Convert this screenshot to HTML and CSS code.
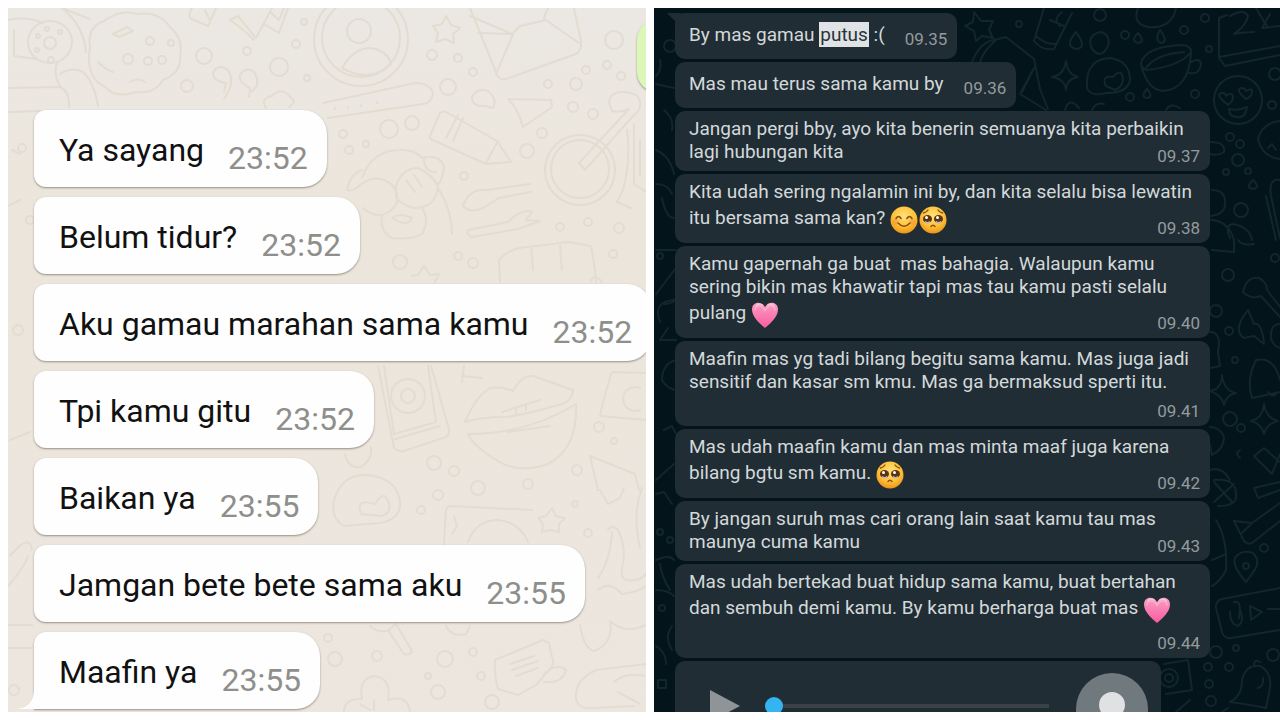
FILE: index.html
```html
<!DOCTYPE html>
<html lang="id">
<head>
<meta charset="UTF-8">
<meta name="viewport" content="width=device-width, initial-scale=1.0">
<title>Chat</title>
<link rel="stylesheet" href="styles.css">
</head>
<body>

<!-- shared emoji -->
<svg class="defs" aria-hidden="true">
    <defs>
        <radialGradient id="face" cx="50%" cy="35%" r="65%">
            <stop offset="0" stop-color="#ffe27a"/>
            <stop offset="0.6" stop-color="#fdc23a"/>
            <stop offset="1" stop-color="#ee9418"/>
        </radialGradient>
        <linearGradient id="pink" x1="0" y1="0" x2="0" y2="1">
            <stop offset="0" stop-color="#f3a3c4"/>
            <stop offset="0.35" stop-color="#fb86b6"/>
            <stop offset="1" stop-color="#f85ba2"/>
        </linearGradient>
        <symbol id="smile" viewBox="0 0 28 28">
            <circle cx="14" cy="14" r="13.5" fill="url(#face)"/>
            <circle cx="5.500" cy="16" r="3" fill="#f79a3c" opacity="0.6"/>
            <circle cx="22.500" cy="16" r="3" fill="#f79a3c" opacity="0.6"/>
            <path d="M6 12.500q2.500-4 5 0M17 12.500q2.500-4 5 0M8 17q6 6.500 12 0" fill="none" stroke="#8a4d10" stroke-width="1.600" stroke-linecap="round"/>
        </symbol>
        <symbol id="plead" viewBox="0 0 28 28">
            <circle cx="14" cy="14" r="13.500" fill="url(#face)"/>
            <ellipse cx="8.500" cy="13" rx="4.500" ry="4" fill="#5a3413"/>
            <ellipse cx="19.500" cy="13" rx="4.500" ry="4" fill="#5a3413"/>
            <circle cx="7.500" cy="11.500" r="1.500" fill="#fff"/>
            <circle cx="18.500" cy="11.500" r="1.500" fill="#fff"/>
            <path d="M6 15.500q2.500 2.500 5 0M17 15.500q2.500 2.500 5 0" fill="none" stroke="#b9b6cc" stroke-width="1.600"/>
            <path d="M4.500 7q3-.5 4.500-3M23.500 7q-3-.5-4.500-3M12 20.500q2-2.500 4 0" fill="none" stroke="#8c4f10" stroke-width="1.400" stroke-linecap="round"/>
        </symbol>
        <symbol id="heart" viewBox="0 0 28 28">
            <path d="M14 27C8 22 1 15.500 1 8.500 1 0 11 0 14 6c3-6 13-6 13 2.500C27 15.500 20 22 14 27z" fill="url(#pink)"/>
            <path d="M4 9.500c0-6 7-6.500 10 0 3-6.500 10-6 10 0" fill="none" stroke="#ffb3d1" stroke-width="1.200"/>
            <path d="M5 5c1-2 4-2.500 6-1M17 4c2-1.500 5-1 6 1" fill="none" stroke="#f8c6da" stroke-width="1.400" stroke-linecap="round"/>
        </symbol>
    </defs>
</svg>

<main class="compare">

    <section class="chat light">
        <svg class="doodles" viewBox="8 8 638 704" preserveAspectRatio="xMinYMin slice" aria-hidden="true">
            <!-- teddy, cookie, notes -->
            <path d="M8 20q20-4 34 3M14 30v26l22 3M62 8l28 11M62 8q22 18 24 44M8 88l52-1q10 4 9 20M8 112l34-1M60 74q12-8 23-2 11 10 15 34M57 62q-4 12 3 24"/>
            <ellipse cx="50" cy="42" rx="22" ry="21"/>
            <circle cx="50" cy="43" r="6"/><circle cx="38" cy="36" r="2"/><circle cx="47" cy="29" r="2"/><circle cx="60" cy="32" r="2"/><circle cx="37" cy="50" r="2"/><circle cx="51" cy="60" r="3"/>
            <path d="M90 47q-3-20 14-26 16-12 33-7 22-3 33 13 14 12 10 30 1 16-17 23-8 14-27 12-20 7-31-5-20-10-15-40z"/>
            <path d="M113 34l14-7 6 4-14 6zM98 62q8 8 15 10M130 82q8-5 15 0"/>
            <circle cx="150" cy="41" r="4"/><circle cx="128" cy="59" r="5"/><circle cx="171" cy="43" r="3"/><circle cx="148" cy="61" r="4"/><circle cx="162" cy="60" r="4"/>
            <path d="M192 8q-6 10 2 12l14 6 8-18M205 10l4 9M230 20l8-4 18 22 16-30M230 20q12 8 24 20M264 24l15 9 9-25M270 12l9 8 5-12"/>
            <circle cx="204" cy="56" r="8"/><circle cx="279" cy="67" r="9"/><circle cx="187" cy="86" r="6"/><circle cx="247" cy="51" r="4"/><circle cx="304" cy="22" r="3"/><circle cx="296" cy="44" r="4"/><circle cx="307" cy="78" r="3"/>
            <path d="M224 92l2-9q-13-2-13-10 5-10 15-3 8 12-4 29M249 97l1-9q-12-6-10-13 6-9 14-3 8 12-3 20M266 108q-6-10 6-12 10-10 18 1 8 4-1 10"/>

            <!-- contact, star, envelope -->
            <circle cx="361" cy="39" r="47"/><circle cx="361" cy="38" r="39"/><circle cx="359" cy="31" r="12"/>
            <path d="M342 68q14-24 34-19 13 5 15 15-20 20-49 4z"/>
            <path d="M446 16l5 9 9 3-7 6 1 9-9-4-9 3 2-9-5-7 9-2z"/>
            <path d="M470 8l28 69q3 3 8 2l70-25q6-4 5-13l-7-33M496 74l18-42 6-6 22-5q5-2 8 2l29 20M470 16l42 18-34-1M548 8q-4 8-4 12"/>
            <circle cx="614" cy="40" r="9"/><circle cx="432" cy="55" r="5"/><circle cx="458" cy="58" r="4"/><circle cx="473" cy="72" r="4"/><circle cx="448" cy="87" r="8"/><circle cx="576" cy="84" r="6"/><circle cx="586" cy="70" r="4"/><circle cx="548" cy="84" r="4"/><circle cx="607" cy="65" r="4"/><circle cx="621" cy="76" r="4"/>

            <!-- ruler, pencil, plane -->
            <path d="M323 103l92-20q15 0 18 10-1 10-10 11l-95 14M335 108v1M348 107v1M361 105v1M377 102v1"/>
            <path d="M472 97q6-10 16-6 10 8 5 17l-8-2q-13 1-13-9zM508 99l43 1 1 7-29 20q-5-18-15-28z"/>
            <path d="M430 136l10-23q4-3 8 0l49 28 14 21-25 2-51-23q-6-2-5-5zM446 138l12-23M453 141l10-23M486 163l12-22"/>
            <circle cx="389" cy="129" r="9"/><circle cx="412" cy="123" r="7"/><circle cx="343" cy="134" r="4"/><circle cx="349" cy="150" r="4"/><circle cx="366" cy="144" r="3"/><circle cx="527" cy="151" r="7"/><circle cx="542" cy="133" r="5"/><circle cx="573" cy="107" r="5"/><circle cx="593" cy="114" r="5"/>

            <!-- bicycle -->
            <circle cx="580" cy="170" r="35"/><circle cx="580" cy="169" r="29"/>
            <path d="M579 163l50-54q-10 4-17 2-8-15 7-19 22-1 21 13 0 6-7 11l-48 54zM627 130q4 30-4 60l-6 12 14 6M634 124v60l12 8M640 140v36"/>

            <!-- monkey, spoons -->
            <path d="M362 178q10-28 38-28 14-1 22 8 20-4 22 10-2 14-7 17M362 170q-12 4-15 20 6 2 12-4 16-14 32-2 14 16-2 28-12 8-26-4M396 186q6-18 22-18 14 6 20 18-2 22-24 22-10-2-18-10zM406 180l9 12M414 175l8 12M424 158q0 14 12 14M382 216q-2 16 10 22 20 2 30-4 8-14 0-26M392 218q8-6 20 0-4 10-20 0zM438 188q14 22 14 46"/>
            <path d="M463 206q6-18 24-16l43-6M463 206q8 8 20 2l16-10 32-6M468 230l40-8q14-14 24-10l-6 8 14 1-22 8-46 8q-6-2-4-7z"/>
            <circle cx="560" cy="227" r="4"/><circle cx="588" cy="222" r="4"/><circle cx="619" cy="228" r="5"/><circle cx="464" cy="176" r="4"/>
            <path d="M500 282l-1-22q6-8 20-12l50-6 22 4q4 20 5 36M531 246l2 24M560 246l2 24M412 276l6-1 6-9 6 9 9-1-4 8M590 282q4-10 12 0"/>
            <circle cx="400" cy="262" r="7"/><circle cx="473" cy="263" r="5"/><circle cx="458" cy="256" r="4"/><circle cx="613" cy="254" r="4"/>

            <!-- music player, lips, camera -->
            <path d="M378 366l16 82q4 4 10 3l42-14q4-3 3-8l-18-63M384 366l10 68 42-12-8-56M392 440l48-14"/>
            <circle cx="408" cy="396" r="17"/><circle cx="408" cy="396" r="7"/>
            <path d="M465 422q12-28 26-34 10-2 22 3 8-16 20-15l40 14q0 8-8 13-40 12-60 14-24 0-40 5zM468 434q60 0 108-30 2 44-28 60-30 10-50-3-24-14-30-27zM502 412l38-12M508 432l42-6M516 408v6M526 404v6"/>
            <path d="M646 373l-34-1q-8 24-12 44l46 4M640 388a12 12 0 1 0 0 22M462 376l20 2M464 366l-2 16"/>
            <circle cx="599" cy="427" r="5"/><circle cx="614" cy="441" r="3"/><circle cx="434" cy="463" r="7"/><circle cx="454" cy="471" r="5"/><circle cx="577" cy="470" r="5"/>
            <path d="M590 456l8 34M590 456l45 18 4 16M600 490l8 14 12-6 4-10M345 455q4 14 16 12 12-8 10-20"/>

            <!-- balloon, magnifier, phone frame -->
            <path d="M334 500q8-26 32-25 30 2 34 26 2 18-20 22l-36 3q-14-8-10-26zM361 514q-6-16 14-10 10-16 14 0 2 10-8 12z"/>
            <path d="M444 544l2-34q1-4 6-4l80 4M468 542q8-22 30-22 22 2 30 22M454 516l3 10-5 8M552 508l4 8 9 2-6 6v8l-8-2-9 2 1-8-5-6 8-2z"/>
            <circle cx="438" cy="495" r="5"/><circle cx="421" cy="510" r="4"/><circle cx="478" cy="488" r="7"/><circle cx="528" cy="484" r="5"/><circle cx="575" cy="504" r="3"/><circle cx="588" cy="533" r="4"/>
            <path d="M608 530q4-6 10 0 8 16 5 34-4 14 4 16 12 2 19-6M612 532q-2 30-14 46M642 488q-10 26-2 60M598 590q12-10 24 4 16-2 24-8M580 625q4 24 14 26 20-8 16-30 16 14 36 4"/>
            <path d="M388 630l16 24q6 2 8-3l-16-27zM370 626q8 8 20 4M446 626q6 12 20 8l4-8"/>
            <circle cx="335" cy="659" r="7"/><circle cx="377" cy="656" r="5"/><circle cx="445" cy="659" r="8"/><circle cx="438" cy="692" r="7"/><circle cx="428" cy="676" r="3"/><circle cx="473" cy="652" r="4"/><circle cx="481" cy="676" r="4"/><circle cx="492" cy="702" r="7"/><circle cx="328" cy="638" r="4"/>
            <path d="M344 712q0-14 18-13-4-20 12-23 18 2 14 24 20-6 22 12M374 700v10M360 704l10 6"/>
            <path d="M495 660l48-20 6 3 3 14q4 6-4 14l-12 14-18 10-20-6q-4-14-3-29zM510 664l24-8M512 670l26-9M516 676l22-8M544 674q14-12 22-4-4 14-22 12"/>
            <path d="M576 700q-2-20 20-30l50-6M576 700q4 10 18 8l40-2M614 682q12-10 30-6M618 692l22 12"/>

            <!-- left margin -->
            <path d="M8 206l12-6M12 150l8 4M10 440l20-8M10 556q20-24 22-6M8 586q16-18 20-30M8 625h24M8 648h24"/>
            <circle cx="22" cy="148" r="4"/><circle cx="30" cy="220" r="4"/><circle cx="18" cy="330" r="5"/><circle cx="14" cy="690" r="5"/>
        </svg>

        <div class="messages">
            <div class="sent"></div>
            <div class="bubble"><p>Ya sayang</p><time>23:52</time></div>
            <div class="bubble"><p>Belum tidur?</p><time>23:52</time></div>
            <div class="bubble"><p>Aku gamau marahan sama kamu</p><time>23:52</time></div>
            <div class="bubble"><p>Tpi kamu gitu</p><time>23:52</time></div>
            <div class="bubble"><p>Baikan ya</p><time>23:55</time></div>
            <div class="bubble"><p>Jamgan bete bete sama aku</p><time>23:55</time></div>
            <div class="bubble tail"><p>Maafin ya</p><time>23:55</time></div>
        </div>
    </section>

    <section class="chat dark">
        <svg class="doodles" viewBox="654 8 626 704" preserveAspectRatio="xMinYMin slice" aria-hidden="true">
            <!-- star, bottle, drops -->
            <path d="M974 12l7 9 12 0-4 9 4 8-11-2-6 5-2-10-9-5 8-4z"/>
            <path d="M1044 8l-10 33q8 10 20 8l18-36M1036 36q10 9 20 8M1050 20l14 6M1062 12q-10 8-2 14M1076 32q12 16 0 17-12-3 0-17M1138 33q8 9 0 10-8-2 0-10M1160 30q9 12 1 13-7-3-1-13M1101 32q10 3 7 14-7 14-16 3-6-14 9-17z"/>
            <path d="M1138 8q-6 16 10 19 24 2 28-19"/>
            <circle cx="1100" cy="15" r="6"/><circle cx="1019" cy="24" r="3"/><circle cx="1125" cy="35" r="4"/><circle cx="1205" cy="18" r="4"/><circle cx="1184" cy="30" r="4"/><circle cx="1209" cy="49" r="3"/>
            <!-- gem, sparkle, cup -->
            <path d="M972 62q8-20 22-22l12-3 28 22 6 30 8 20M996 40q-12 10-16 22M1022 92l12-24-14 26 26 16M1066 61q1 13 12 16-12 2-12 13-1-11-14-13 12-2 14-16z"/>
            <path d="M1087 88q-2-29 23-30 20 3 20 22-2 13-24 13-16 4-19-5zM1106 86q-5-11 7-9 8-9 10 1 0 9-8 12z"/>
            <path d="M1141 63q4-16 40-18 10 0 10 7-10 14-44 18-6-1-6-7zM1141 64q6 26 22 27 26-2 28-38M1191 62q10-5 10 3-2 10-12 8M1146 68q10-14 38-16"/>
            <circle cx="1130" cy="97" r="4"/><circle cx="1195" cy="94" r="4"/><path d="M1147 89q7 8 0 9-7-1 0-9M1065 110q4-14 14-2M1092 110q4-8 12-6M1166 110q4-8 14-2"/>
            <!-- calendar, love face -->
            <path d="M1219 18v40l6 8 55-11M1219 57l61-11M1219 18l8-3M1230 16q14-8 18 0-2 10-14 18 10-2 20-2M1270 14l-8 14 18-2M1256 8l12 20"/>
            <circle cx="1238" cy="100" r="24"/>
            <path d="M1228 105q-14-11-6-12 4 0 4 3 6-5 7 1 0 4-5 8zM1246 99q-12-10-4-11 3 0 4 3 7-4 6 2-1 4-6 6zM1229 109q10 2 18-2-2 12-10 10-8 0-8-8z"/>
            <circle cx="1275" cy="74" r="6"/><circle cx="1272" cy="105" r="4"/><circle cx="1230" cy="137" r="4"/><circle cx="1240" cy="144" r="4"/><circle cx="1238" cy="160" r="6"/><circle cx="1226" cy="172" r="3"/><circle cx="1248" cy="171" r="3"/>
            <path d="M1280 121q-18 2-22 18 4 18 22 20M1268 148l4-4 4 6M1210 142q16 0 14 10-6 4-14 2M1253 180q8 8 0 9-8-1 0-9M1212 190q14 0 13 14 0 10-14 12M1210 220q18 0 24 20M1280 180q-12-2-9 16l9 42M1266 196l10 44M1230 238q-6-14 4-14 16 4 18 16"/>
            <circle cx="1241" cy="210" r="7"/><circle cx="1228" cy="275" r="6"/><circle cx="1275" cy="258" r="4"/><circle cx="1216" cy="311" r="6"/><circle cx="1229" cy="331" r="4"/><circle cx="1235" cy="360" r="3"/><circle cx="1230" cy="419" r="7"/><circle cx="1241" cy="428" r="4"/>
            <!-- guitar, bolt, bell, sparkles -->
            <path d="M1212 250l22 2v-12M1238 240q4 6 16 4M1243 292q4-16 16-14 8 4 8 12l13 17M1243 292q8 8 18 4l19 21M1280 324q-10 0-9 14 2 8 9 10M1248 310q-16 20-4 28l10-2 10 8q-2-22-10-20zM1210 332q12 0 8 20l2 14-10 2"/>
            <path d="M1256 360q-10 20-4 38l28-6M1256 360q18-4 24 20M1268 392q4 6 8 2M1222 375q2 16 14 18-10 2-12 12-2-10-14-14 12-2 12-16zM1264 404q2 14 14 17-11 2-14 13-2-10-13-13 12-3 13-17z"/>
            <path d="M1210 427q10 0 14 10 0 12-12 18l-2-10M1254 456l10-8 16 14M1254 456l18 18 8-20M1240 450q-6 4 0 8M1210 470q12-4 20 10"/>
            <!-- ball, pencil box, pin -->
            <path d="M1214 480q22-2 22 14 2 12-18 12M1214 482l18 20M1234 484l-20 18M1280 490l-22 8-4-10 26-6M1234 521l18 2 28-20M1234 521l10 20q4 4 8 2l28-22M1252 523l-10 10"/>
            <path d="M1246 582q-14-16-11-24 6-9 18-5 8 8 1 18zM1216 520q12 20 10 50-6 12-14 16M1212 560l14-6"/>
            <circle cx="1246" cy="566" r="3"/><circle cx="1264" cy="548" r="4"/>
            <!-- voice note, camera, bell -->
            <path d="M1280 588l-58 11q-7 2-6 9l6 24q2 7 9 6l49-8M1230 612q0 12 8 14 6-4 3-14M1234 602q6-2 6 8l-1 8M1250 606l12 6-11 8zM1268 609h12"/>
            <circle cx="1216" cy="652" r="6"/><circle cx="1236" cy="648" r="3"/><circle cx="1273" cy="655" r="6"/><circle cx="1208" cy="667" r="4"/><circle cx="1229" cy="667" r="4"/><circle cx="1209" cy="684" r="4"/><circle cx="1211" cy="701" r="5"/><circle cx="1169" cy="678" r="9"/><circle cx="1169" cy="678" r="4"/>
            <path d="M1164 664l24-4 4 30-26 4M1230 702q12-6 12-22 4-16 18-14 12 6 10 22l-4 20q-20-4-36-6zM1254 666q0-8 6-4M1258 688q6-2 5-10M1176 712l14-12M1222 712l6-4"/>
            <!-- left margin -->
            <path d="M656 84l18 4M660 60q2 10-4 16M664 110q10 8 8 20M656 150q14 6 18 24M656 184q12 0 16 10M662 198q4 20 12 20M656 250h20M656 294l20-26M664 304q10 0 12-6M660 322q-8-20 14-22M676 340l-16 0 8-12M676 360q-14 4-14 20 4 8 14 10M664 430l8-4 4 8M656 480l18-16M656 494l8-2 8 12M656 560q14-6 18 0M660 564q2 14 10 26M656 590q12 0 18 6M672 626q-8 10 0 24M656 646q10 6 10 18M658 680h8v8h-8z"/>
            <circle cx="670" cy="46" r="6"/><circle cx="660" cy="256" r="3"/><circle cx="670" cy="540" r="3"/><circle cx="660" cy="532" r="3"/><circle cx="662" cy="608" r="3"/>
        </svg>

        <div class="messages">
            <div class="bubble single first"><p>By mas gamau <mark>putus</mark> :(</p><time>09.35</time></div>
            <div class="bubble single"><p>Mas mau terus sama kamu by</p><time>09.36</time></div>
            <div class="bubble"><p>Jangan pergi bby, ayo kita benerin semuanya kita perbaikin<br>lagi hubungan kita</p><time>09.37</time></div>
            <div class="bubble"><p>Kita udah sering ngalamin ini by, dan kita selalu bisa lewatin<br>itu bersama sama kan? <svg class="emoji" role="img" aria-label="senyum"><use href="#smile"/></svg><svg class="emoji" role="img" aria-label="memohon"><use href="#plead"/></svg></p><time>09.38</time></div>
            <div class="bubble"><p>Kamu gapernah ga buat&nbsp; mas bahagia. Walaupun kamu<br>sering bikin mas khawatir tapi mas tau kamu pasti selalu<br>pulang <svg class="emoji" role="img" aria-label="hati"><use href="#heart"/></svg></p><time>09.40</time></div>
            <div class="bubble below"><p>Maafin mas yg tadi bilang begitu sama kamu. Mas juga jadi<br>sensitif dan kasar sm kmu. Mas ga bermaksud sperti itu.</p><time>09.41</time></div>
            <div class="bubble"><p>Mas udah maafin kamu dan mas minta maaf juga karena<br>bilang bgtu sm kamu. <svg class="emoji" role="img" aria-label="memohon"><use href="#plead"/></svg></p><time>09.42</time></div>
            <div class="bubble"><p>By jangan suruh mas cari orang lain saat kamu tau mas<br>maunya cuma kamu</p><time>09.43</time></div>
            <div class="bubble below"><p>Mas udah bertekad buat hidup sama kamu, buat bertahan<br>dan sembuh demi kamu. By kamu berharga buat mas <svg class="emoji" role="img" aria-label="hati"><use href="#heart"/></svg></p><time>09.44</time></div>
            <div class="voice">
                <button class="play" type="button" aria-label="Putar">
                    <svg viewBox="0 0 32 34"><path d="M1 1l30 16L1 33z"/></svg>
                </button>
                <input class="seek" type="range" min="0" max="100" value="0" aria-label="Posisi audio">
                <svg class="avatar" viewBox="0 0 72 72" aria-hidden="true">
                    <circle cx="36" cy="36" r="36" fill="#70797d"/>
                    <circle cx="36" cy="32" r="13" fill="#dfe1e2"/>
                    <path d="M12 62q4-14 24-14t24 14q-24 18-48 0z" fill="#dfe1e2"/>
                </svg>
            </div>
        </div>
    </section>

</main>

</body>
</html>
```
FILE: styles.css
```css
* {
    box-sizing: border-box;
}
body {
    margin: 0;
    background-color: #fff;
    font-family: Roboto, "Liberation Sans", sans-serif;
}
p {
    margin: 0;
}
.defs {
    position: absolute;
    width: 0;
    height: 0;
}
.compare {
    display: grid;
    grid-template-columns: 638fr 626fr;
    gap: 8px;
    height: 100vh;
    padding: 8px 0 8px 8px;
}
.chat {
    position: relative;
    min-width: 0;
    overflow: hidden;
}
.doodles {
    position: absolute;
    inset: 0;
    width: 100%;
    height: 100%;
    fill: none;
    stroke-linejoin: round;
    stroke-linecap: round;
}
.messages {
    position: relative;
    display: flex;
    flex-direction: column;
    align-items: flex-start;
}

/* light chat */
.light {
    background: linear-gradient(#ebe8e3, #ece5db 30%, #ede6df);
}
.light .doodles {
    stroke: #e2dcd1;
    stroke-width: 2;
}
.light .messages {
    gap: 10px;
    padding: 12px 0 0 26px;
}
.light .bubble {
    position: relative;
    display: flex;
    align-items: flex-end;
    gap: 24px;
    height: 77px;
    padding: 0 19px 10px 25px;
    background-color: #fefefe;
    border-radius: 12px 24px 24px 12px;
    box-shadow: 0 1px 2px rgba(90, 85, 75, 0.6);
    font-size: 32px;
    line-height: 38px;
    white-space: nowrap;
    color: #111;
}
.light .bubble p {
    margin-bottom: 8px;
}
.light .bubble time {
    color: #8e8f8b;
}
.light .sent {
    align-self: flex-end;
    width: 40px;
    height: 72px;
    margin: 0 -31px 8px 0;
    background-color: #dcf8b8;
    border-radius: 20px;
    box-shadow: 0 1px 2px rgba(90, 85, 75, 0.6);
}
.light .tail {
    border-bottom-left-radius: 0;
}
.light .tail::before {
    content: "";
    position: absolute;
    right: 100%;
    bottom: 0;
    width: 16px;
    height: 16px;
    background: radial-gradient(circle at 0 0, transparent 15px, #fefefe 16px);
}

/* dark chat */
.dark {
    background-color: #03141b;
}
.dark .doodles {
    stroke: #14262d;
    stroke-width: 2;
}
.dark .messages {
    gap: 3px;
    padding: 5px 70px 0 21px;
}
.dark .bubble {
    position: relative;
    display: grid;
    width: 100%;
    padding: 6px 10px 8px 14px;
    background-color: #212d34;
    border-radius: 10px;
    font-size: 19px;
    line-height: 23px;
    white-space: nowrap;
    color: #d3d9db;
}
.dark .bubble p,
.dark .bubble time {
    grid-area: 1 / 1;
}
.dark .bubble time {
    align-self: end;
    justify-self: end;
    font-size: 17px;
    line-height: 14px;
    color: #939b9f;
}
.dark .below {
    grid-template-rows: auto 25px;
}
.dark .below time {
    grid-area: 2 / 1;
}
.dark .single {
    display: flex;
    justify-content: space-between;
    gap: 20px;
    width: auto;
    padding: 10px 10px 13px 14px;
}
.dark .first::before {
    content: "";
    position: absolute;
    left: -8px;
    top: 0;
    border-top: 14px solid #212d34;
    border-left: 14px solid transparent;
}
mark {
    padding: 1px;
    background-color: #dfe3e5;
    color: #2b3338;
}
.emoji {
    width: 28px;
    height: 28px;
    margin: 3px 1px 1px 0;
    vertical-align: middle;
}

/* voice note */
.voice {
    display: flex;
    align-items: center;
    width: 486px;
    max-width: 100%;
    padding: 12px 13px 12px 34px;
    background-color: #212d34;
    border-radius: 10px;
}
.play {
    width: 32px;
    height: 34px;
    margin: 0 24px 6px 0;
    padding: 0;
    border: none;
    background: none;
    cursor: pointer;
}
.play svg {
    display: block;
    fill: #8e9498;
}
.seek {
    flex: 1;
    min-width: 0;
    height: 18px;
    margin: 0 27px 6px 0;
    appearance: none;
    background: linear-gradient(#3a4248, #3a4248) center / 100% 4px no-repeat;
}
.seek::-webkit-slider-thumb {
    appearance: none;
    width: 18px;
    height: 18px;
    border-radius: 50%;
    background-color: #34b4f0;
}
.avatar {
    width: 72px;
    height: 72px;
}
```
